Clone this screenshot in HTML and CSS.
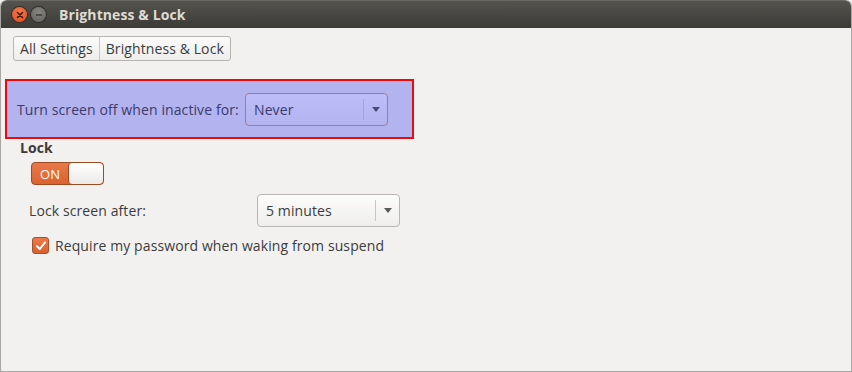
FILE: index.html
```html
<!DOCTYPE html>
<html>
<head>
<meta charset="utf-8">
<link rel="stylesheet" href="styles.css">
</head>
<body>
<div class="window">
  <div class="titlebar">
    <div class="wbtns">
      <span class="wbtn close"><svg width="8" height="8" viewBox="0 0 8 8"><path d="M1.5 1.5 L6.5 6.5 M6.5 1.5 L1.5 6.5" stroke="#3a1a10" stroke-width="1.6" stroke-linecap="round"/></svg></span>
      <span class="wbtn min"><svg width="8" height="8" viewBox="0 0 8 8"><path d="M1 4 H7" stroke="#3c3b37" stroke-width="1.6"/></svg></span>
    </div>
    <div class="title">Brightness &amp; Lock</div>
  </div>
  <div class="content">
    <div class="crumbs">
      <span class="crumb">All Settings</span>
      <span class="crumb">Brightness &amp; Lock</span>
    </div>
    <div class="highlight">
      <span class="hl-label">Turn screen off when inactive for:</span>
      <div class="combo combo-hl">
        <span class="combo-text">Never</span>
        <span class="combo-arrow"><svg width="8" height="5" viewBox="0 0 8 5"><path d="M0 0 H8 L4 5 Z" fill="#4a4a78"/></svg></span>
      </div>
    </div>
    <div class="section-title">Lock</div>
    <div class="switch">
      <span class="switch-on">ON</span>
      <span class="switch-knob"></span>
    </div>
    <div class="row">
      <span class="row-label">Lock screen after:</span>
      <div class="combo">
        <span class="combo-text">5 minutes</span>
        <span class="combo-arrow"><svg width="8" height="5" viewBox="0 0 8 5"><path d="M0 0 H8 L4 5 Z" fill="#5a5955"/></svg></span>
      </div>
    </div>
    <div class="check-row">
      <span class="checkbox"><svg width="12" height="12" viewBox="0 0 12 12"><path d="M2 6.2 L4.8 9 L10 2.5" fill="none" stroke="#ffffff" stroke-width="2" stroke-linecap="round" stroke-linejoin="round"/></svg></span>
      <span class="check-label">Require my password when waking from suspend</span>
    </div>
  </div>
</div>
</body>
</html>
```

FILE: styles.css
```css
html, body {
  margin: 0;
  padding: 0;
  background: #f2f1f0;
}
body {
  width: 852px;
  height: 372px;
  overflow: hidden;
  font-family: "Open Sans", "Noto Sans", sans-serif;
  font-size: 14px;
  letter-spacing: 0.1px;
  color: #3c3c3c;
}
.window {
  width: 852px;
  height: 372px;
  box-sizing: border-box;
  border: 1px solid #a8a7a2;
  border-top: none;
  border-radius: 6px 6px 0 0;
  background: #f2f1f0;
  overflow: hidden;
  display: flex;
  flex-direction: column;
}
.titlebar {
  height: 28px;
  flex: none;
  background: linear-gradient(#54534e, #3c3b37);
  border-top: 1px solid #6a6964;
  box-sizing: border-box;
  display: flex;
  align-items: center;
  border-radius: 6px 6px 0 0;
}
.wbtns {
  display: flex;
  gap: 4px;
  margin-left: 11px;
}
.wbtn {
  width: 15px;
  height: 15px;
  border-radius: 50%;
  display: flex;
  align-items: center;
  justify-content: center;
}
.close {
  background: radial-gradient(circle at 50% 35%, #f47a4e, #df4a1c);
  box-shadow: 0 0 0 1px #3a2a22;
}
.min {
  background: radial-gradient(circle at 50% 35%, #88877f, #5f5e5a);
  box-shadow: 0 0 0 1px #2e2d2a;
}
.title {
  margin-left: 13px;
  font-weight: bold;
  font-size: 14px;
  letter-spacing: 0.1px;
  color: #dfdbd2;
}
.content {
  flex: 1;
  display: flex;
  flex-direction: column;
  align-items: flex-start;
  padding: 8px 0 0 0;
}
.crumbs {
  margin-left: 12px;
  height: 25px;
  box-sizing: border-box;
  border: 1px solid #b6b4ae;
  border-radius: 3px;
  background: linear-gradient(#fbfbfa, #eeedeb);
  display: flex;
  align-items: center;
}
.crumb {
  padding: 0 6px;
  height: 100%;
  display: flex;
  align-items: center;
}
.crumb + .crumb {
  border-left: 1px solid #c9c7c2;
}
.highlight {
  margin-top: 18px;
  margin-left: 4px;
  width: 409px;
  height: 60px;
  box-sizing: border-box;
  border: 2px solid #ee0a0a;
  background: #b3b3f0;
  display: flex;
  align-items: center;
  padding-left: 10px;
}
.hl-label {
  color: #3b3b6b;
  width: 228px;
  white-space: nowrap;
}
.combo {
  width: 143px;
  height: 33px;
  box-sizing: border-box;
  border: 1px solid #b8b6b0;
  border-radius: 4px;
  background: linear-gradient(#fcfcfb, #efeeec);
  display: flex;
  align-items: center;
}
.combo-hl {
  border-color: #a27a98;
  background: linear-gradient(#bdbdf9, #b3b3ef);
  color: #3b3b6b;
}
.combo-text {
  flex: 1;
  padding-left: 8px;
}
.combo-arrow {
  width: 23px;
  height: 21px;
  border-left: 1px solid #c9c7c2;
  display: flex;
  align-items: center;
  justify-content: center;
}
.combo-hl .combo-arrow {
  border-left-color: #a5a3d8;
}
.section-title {
  margin-top: 0px;
  margin-left: 19px;
  font-weight: bold;
  height: 18px;
  line-height: 18px;
}
.switch {
  margin-top: 5px;
  margin-left: 30px;
  width: 73px;
  height: 23px;
  box-sizing: border-box;
  border: 1px solid #9c4a22;
  border-radius: 4px;
  background: linear-gradient(#ea7848, #dc6230);
  display: flex;
  overflow: hidden;
}
.switch-on {
  width: 36px;
  color: #ffffff;
  display: flex;
  align-items: center;
  justify-content: center;
  font-size: 13px;
}
.switch-knob {
  flex: 1;
  background: linear-gradient(#ffffff, #ebeae8);
  border-left: 1px solid #9c4a22;
  border-radius: 4px;
}
.row {
  margin-top: 9px;
  margin-left: 28px;
  width: 371px;
  display: flex;
  align-items: center;
  justify-content: space-between;
}
.check-row {
  margin-top: 9px;
  margin-left: 31px;
  display: flex;
  align-items: center;
  gap: 6px;
}
.checkbox {
  width: 17px;
  height: 17px;
  box-sizing: border-box;
  border: 1px solid #a8502a;
  border-radius: 3px;
  background: linear-gradient(#ec7a4a, #d8602e);
  display: flex;
  align-items: center;
  justify-content: center;
}
```
